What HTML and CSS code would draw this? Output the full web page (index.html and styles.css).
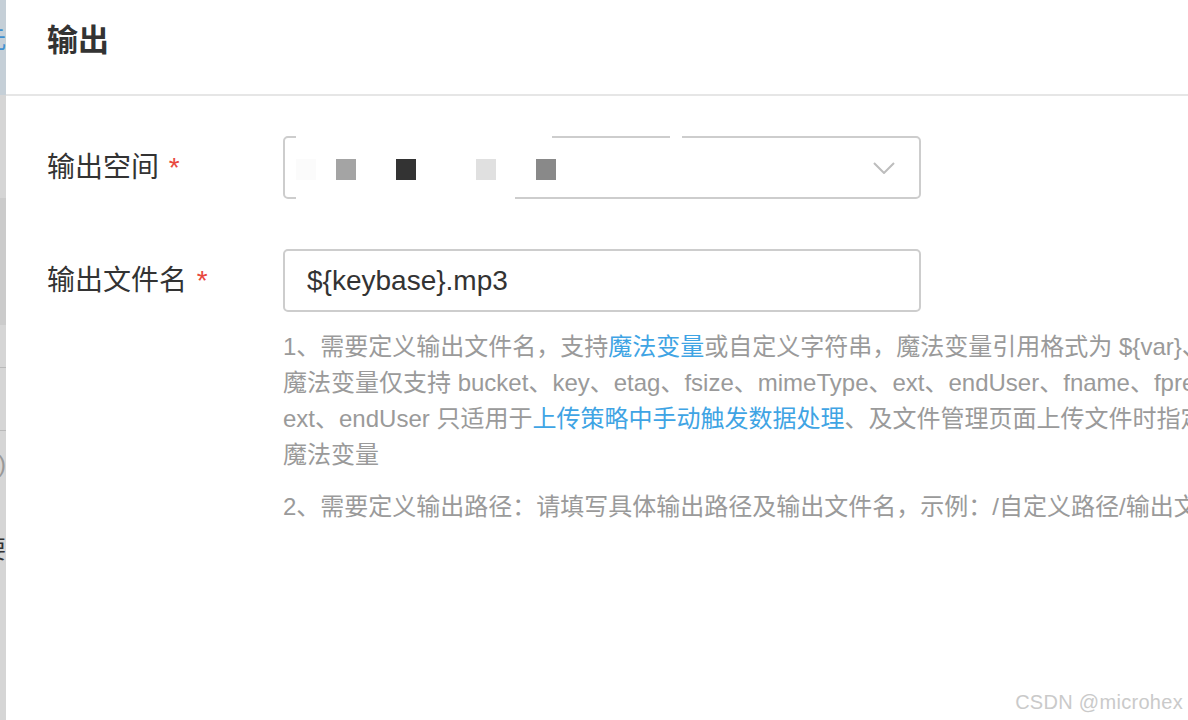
FILE: index.html
```html
<!DOCTYPE html>
<html lang="zh-CN">
<head>
    <meta charset="UTF-8">
    <meta name="viewport" content="width=device-width, initial-scale=1.0">
    <title>输出</title>
    <link rel="stylesheet" href="styles.css">
</head>
<body>
    <!-- Page behind the drawer, only a sliver shows -->
    <div class="backdrop">
        <div class="bd-top"><span class="bd-glyph blue">元</span></div>
        <div class="bd-band"></div>
        <div class="bd-dark"></div>
        <div class="bd-gap"></div>
        <div class="bd-line"></div>
        <div class="bd-line bd-text"><span class="bd-glyph">0)</span></div>
        <div class="bd-text bd-last"><span class="bd-glyph dark">需要</span></div>
    </div>

    <div class="drawer">
        <div class="drawer-header">
            <h2>输出</h2>
        </div>

        <div class="drawer-body">
            <div class="form-row">
                <label class="form-label">输出空间 <span class="required">*</span></label>
                <div class="select-box">
                    <div class="select-value">
                        <span class="px px1"></span>
                        <span class="px px2"></span>
                        <span class="px px3"></span>
                        <span class="px px4"></span>
                        <span class="px px5"></span>
                    </div>
                    <svg class="chevron" width="22" height="12" viewBox="0 0 22 12">
                        <path d="M1 1 L11 11 L21 1" fill="none" stroke="#bdbdbd" stroke-width="2"/>
                    </svg>
                    <!-- redaction left on the screenshot -->
                    <span class="mask mask-top"></span>
                    <span class="mask mask-bottom"></span>
                    <span class="mask mask-notch"></span>
                </div>
            </div>

            <div class="form-row">
                <label class="form-label">输出文件名 <span class="required">*</span></label>
                <div class="text-input">${keybase}.mp3</div>
            </div>

            <div class="help">
                <p>1、需要定义输出文件名，支持<a href="#">魔法变量</a>或自定义字符串，魔法变量引用格式为 ${var}、$(var)，<br>魔法变量仅支持 bucket、key、etag、fsize、mimeType、ext、endUser、fname、fprefix、keybase，其中魔法变量<br>ext、endUser 只适用于<a href="#">上传策略中手动触发数据处理</a>、及文件管理页面上传文件时指定的数据处理，<br>魔法变量</p>
                <p>2、需要定义输出路径：请填写具体输出路径及输出文件名，示例：/自定义路径/输出文件名</p>
            </div>
        </div>

        <div class="watermark">CSDN @microhex</div>
    </div>
</body>
</html>
```

FILE: styles.css
```css
* {
    margin: 0;
    padding: 0;
    box-sizing: border-box;
}

body {
    font-family: "Liberation Sans", "Noto Sans CJK SC", sans-serif;
    background: #fff;
    color: #333;
    display: flex;
    height: 720px;
    overflow: hidden;
}

/* sliver of the page underneath */
.backdrop {
    width: 6px;
    flex-shrink: 0;
    background: #d5d5d5;
    display: flex;
    flex-direction: column;
    overflow: hidden;
}

.bd-top {
    height: 95px;
    background: #c5cfd7;
    display: flex;
    justify-content: flex-end;
    padding-top: 28px;
}

.bd-band {
    height: 103px;
}

.bd-dark {
    height: 127px;
    background: #cbcbcb;
}

.bd-gap {
    height: 42px;
}

.bd-line {
    height: 63px;
    border-top: 1px solid #b9b9b9;
}

.bd-text {
    display: flex;
    justify-content: flex-end;
    align-items: center;
}

.bd-line.bd-text {
    height: 66px;
}

.bd-last {
    height: 108px;
}

.bd-glyph {
    flex-shrink: 0;
    font-size: 24px;
    line-height: 1;
    color: #999;
    white-space: nowrap;
}

.bd-glyph.blue {
    color: #3f8fd0;
    height: 24px;
}

.bd-glyph.dark {
    color: #333;
}

/* drawer */
.drawer {
    flex: 1;
    min-width: 0;
    position: relative;
    overflow: hidden;
    background: #fff;
}

.drawer-header {
    height: 96px;
    border-bottom: 2px solid #e6e6e6;
    padding: 0 0 14px 41px;
    display: flex;
    align-items: center;
}

.drawer-header h2 {
    font-size: 31px;
    font-weight: 700;
    color: #333;
    line-height: 1;
}

.drawer-body {
    padding: 40px 0 0 41px;
}

.form-row {
    display: grid;
    grid-template-columns: 236px 638px;
    align-items: center;
    margin-bottom: 50px;
}

.form-row + .form-row {
    margin-bottom: 0;
}

.form-label {
    font-size: 28px;
    color: #333;
    line-height: 1;
}

.required {
    color: #e8483d;
    margin-left: 2px;
}

.select-box {
    position: relative;
    height: 63px;
    border: 2px solid #cdcdcd;
    border-radius: 5px;
    display: flex;
    align-items: center;
    padding: 0 24px 0 11px;
}

.select-value {
    flex: 1;
    display: flex;
    align-items: center;
    padding-top: 4px;
}

.px {
    width: 20px;
    height: 21px;
}

.px1 { background: #fbfbfb; }
.px2 { background: #a4a4a4; margin-left: 20px; }
.px3 { background: #333; margin-left: 40px; }
.px4 { background: #e0e0e0; margin-left: 60px; }
.px5 { background: #898989; margin-left: 40px; }

.chevron {
    flex-shrink: 0;
}

.mask {
    position: absolute;
    background: #fff;
    height: 4px;
}

.mask-top {
    top: -3px;
    left: 11px;
    width: 256px;
}

.mask-bottom {
    bottom: -3px;
    left: 11px;
    width: 219px;
}

.mask-notch {
    top: -3px;
    left: 385px;
    width: 12px;
}

.text-input {
    height: 63px;
    border: 2px solid #cdcdcd;
    border-radius: 5px;
    display: flex;
    align-items: center;
    padding: 0 22px;
    font-size: 28px;
    color: #333;
}

.help {
    margin: 17px 0 0 236px;
    font-size: 24px;
    line-height: 36px;
    color: #9a9a9a;
    white-space: nowrap;
}

.help p {
    margin-bottom: 16px;
}

.help a {
    color: #3fa4e4;
    text-decoration: none;
}

.watermark {
    position: absolute;
    right: 5px;
    bottom: 6px;
    font-size: 20px;
    color: #cacaca;
    letter-spacing: 0.3px;
}
```
